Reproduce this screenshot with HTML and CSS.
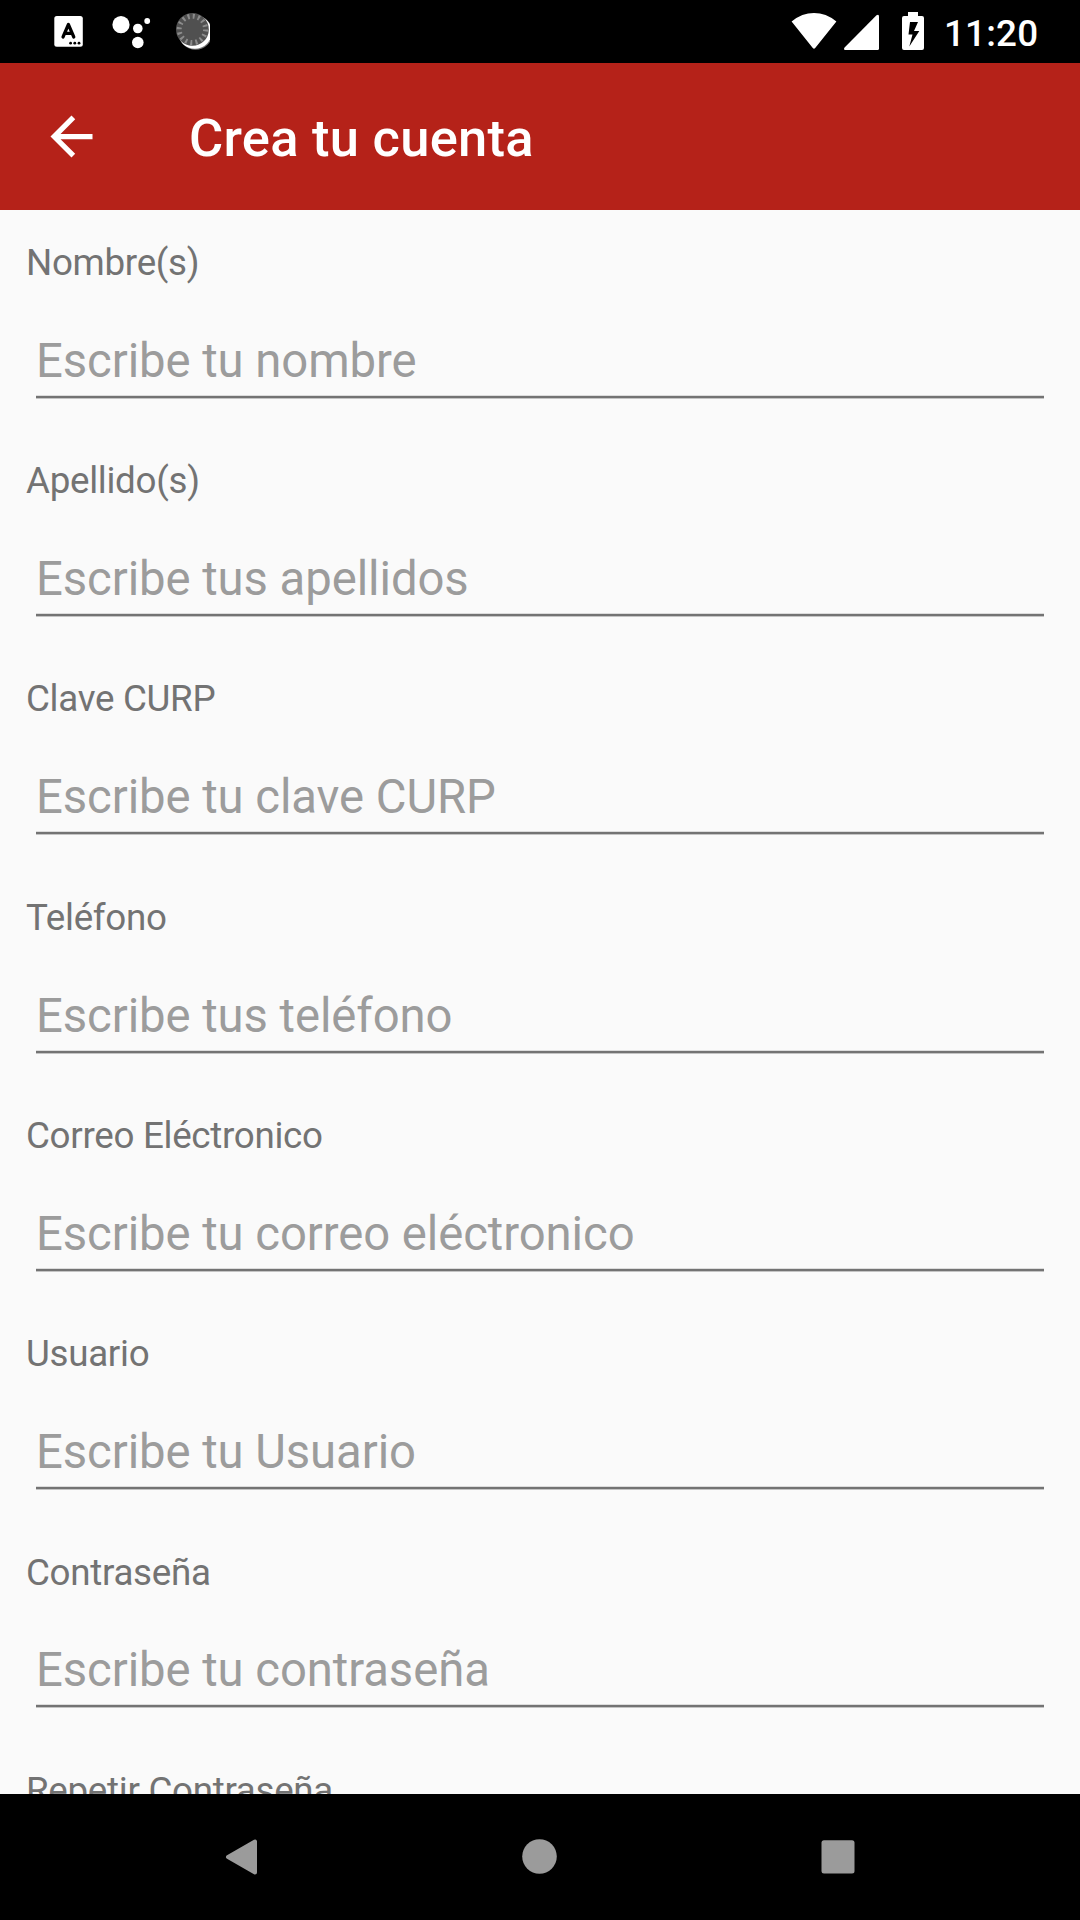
FILE: index.html
```html
<!DOCTYPE html>
<html lang="es">
<head>
  <meta charset="UTF-8">
  <meta name="viewport" content="width=device-width, initial-scale=1.0">
  <title>Crea tu cuenta</title>
  <link rel="stylesheet" href="styles.css">
</head>
<body>

  <div class="status-bar">
    <svg class="status-left" width="160" height="63" viewBox="50 0 160 63">
      <rect x="54.3" y="16" width="28.5" height="30.7" rx="2.5" fill="#fff"/>
      <path d="M63 37 L68.4 24.5 L73.8 37 M65 33.4 H72" fill="none" stroke="#000" stroke-width="3.2" stroke-linecap="round" stroke-linejoin="round"/>
      <g fill="#000">
        <circle cx="70.6" cy="43.2" r="1.4"/>
        <circle cx="74.8" cy="43.2" r="1.4"/>
        <circle cx="79" cy="43.2" r="1.4"/>
      </g>
      <g fill="#fff">
        <circle cx="121" cy="24.7" r="8.6"/>
        <circle cx="137.8" cy="28.5" r="4.8"/>
        <circle cx="147.2" cy="21" r="2.9"/>
        <circle cx="137.8" cy="42.5" r="5.8"/>
      </g>
      <circle cx="195.6" cy="32.8" r="17" fill="#777"/>
      <circle cx="194.8" cy="32" r="16.8" fill="#fff"/>
      <circle cx="192.4" cy="29.4" r="16.4" fill="#505050"/>
      <circle cx="192.4" cy="29.4" r="13.2" fill="none" stroke="#8c8c8c" stroke-width="5" stroke-dasharray="2 3.18"/>
    </svg>
    <svg class="status-right" width="140" height="63" viewBox="788 0 140 63">
      <g fill="#fff">
        <path d="M791.6 21.4 Q802 13 814 13 T836.4 21.4 L815.2 48 Q814 49.6 812.8 48 Z"/>
        <path d="M876.5 15.3 Q879 13.5 879 16.5 V48.5 Q879 50 877.5 50 H845.5 Q843 50 844.6 47.5 Z"/>
        <path fill-rule="evenodd" d="M908 12 H918 V16 H922 Q924 16 924 18 V48 Q924 50 922 50 H904 Q902 50 902 48 V18 Q902 16 904 16 H908 Z M910 22 L908.5 34.5 H912.5 L909.3 46.5 L919.3 31 H914 L918 22 Z"/>
      </g>
    </svg>
    <span class="clock">11:20</span>
  </div>

  <header class="toolbar">
    <svg class="back" viewBox="0 0 24 24">
      <path fill="#fff" d="M20 11H7.83l5.59-5.59L12 4l-8 8 8 8 1.41-1.41L7.83 13H20v-2z"/>
    </svg>
    <h1>Crea tu cuenta</h1>
  </header>

  <form class="form" id="signupForm">
    <div class="form-group">
      <label for="nombre">Nombre(s)</label>
      <input type="text" id="nombre" placeholder="Escribe tu nombre">
    </div>
    <div class="form-group">
      <label for="apellidos">Apellido(s)</label>
      <input type="text" id="apellidos" placeholder="Escribe tus apellidos">
    </div>
    <div class="form-group">
      <label for="curp">Clave CURP</label>
      <input type="text" id="curp" placeholder="Escribe tu clave CURP">
    </div>
    <div class="form-group">
      <label for="telefono">Teléfono</label>
      <input type="tel" id="telefono" placeholder="Escribe tus teléfono">
    </div>
    <div class="form-group">
      <label for="correo">Correo Eléctronico</label>
      <input type="email" id="correo" placeholder="Escribe tu correo eléctronico">
    </div>
    <div class="form-group">
      <label for="usuario">Usuario</label>
      <input type="text" id="usuario" placeholder="Escribe tu Usuario">
    </div>
    <div class="form-group">
      <label for="password">Contraseña</label>
      <input type="password" id="password" placeholder="Escribe tu contraseña">
    </div>
    <div class="form-group">
      <label for="password2">Repetir Contraseña</label>
      <input type="password" id="password2" placeholder="Repite tu contraseña">
    </div>
  </form>

  <nav class="nav-bar">
    <svg width="36" height="40" viewBox="0 0 36 40">
      <path d="M4 20 L31 4.5 V35.5 Z" fill="#9b9b9b" stroke="#9b9b9b" stroke-width="4" stroke-linejoin="round"/>
    </svg>
    <svg width="36" height="40" viewBox="0 0 36 40">
      <circle cx="17.5" cy="19.5" r="17.3" fill="#9b9b9b"/>
    </svg>
    <svg width="36" height="40" viewBox="0 0 36 40">
      <rect x="0.5" y="3.3" width="33" height="33.2" rx="2.5" fill="#9b9b9b"/>
    </svg>
  </nav>

</body>
</html>
```
FILE: styles.css
```css
* {
  box-sizing: border-box;
}

body {
  font-family: Roboto, sans-serif;
  background: #fafafa;
  margin: 0;
  height: 1920px;
  display: flex;
  flex-direction: column;
  overflow: hidden;
}

.status-bar {
  display: flex;
  flex: none;
  height: 63px;
  padding-left: 50px;
  background: #000;
  color: #fff;
}

.status-right {
  margin-left: auto;
}

.clock {
  width: 152px;
  padding-left: 16px;
  font-size: 36.75px;
  font-weight: 500;
  letter-spacing: 0.2px;
  line-height: 67px;
}

.toolbar {
  display: flex;
  flex: none;
  align-items: center;
  height: 147px;
  padding-left: 39.5px;
  background: #b52219;
  color: #fff;
}

.back {
  width: 63px;
  height: 63px;
}

.toolbar h1 {
  margin: 3px 0 0 86.5px;
  font-size: 52.5px;
  font-weight: 500;
  line-height: 62px;
  letter-spacing: 0.25px;
}

.form {
  flex: 1;
  min-height: 0;
  padding: 27px 26px 0;
  overflow: hidden;
}

.form-group {
  height: 218.2px;
}

.form-group label {
  display: block;
  height: 75px;
  font-size: 36.75px;
  line-height: 52px;
  letter-spacing: -0.3px;
  color: #737373;
}

.form-group:nth-child(n+7) label {
  line-height: 54px;
}

.form-group input {
  display: block;
  width: 1008px;
  height: 87px;
  margin: 0 10px;
  padding: 11px 0 0;
  border: none;
  outline: none;
  background: linear-gradient(#dcdcdc 0 1px, #737373 1px 3px, #c4c4c4 3px 4px) bottom / 100% 4px no-repeat;
  font-family: inherit;
  font-size: 47.25px;
  letter-spacing: -0.07px;
  color: #212121;
}

.form-group input::placeholder {
  color: #9c9c9c;
  opacity: 1;
}

.nav-bar {
  display: flex;
  flex: none;
  justify-content: space-between;
  height: 126px;
  padding: 43px 223.5px 0;
  background: #000;
}
```
